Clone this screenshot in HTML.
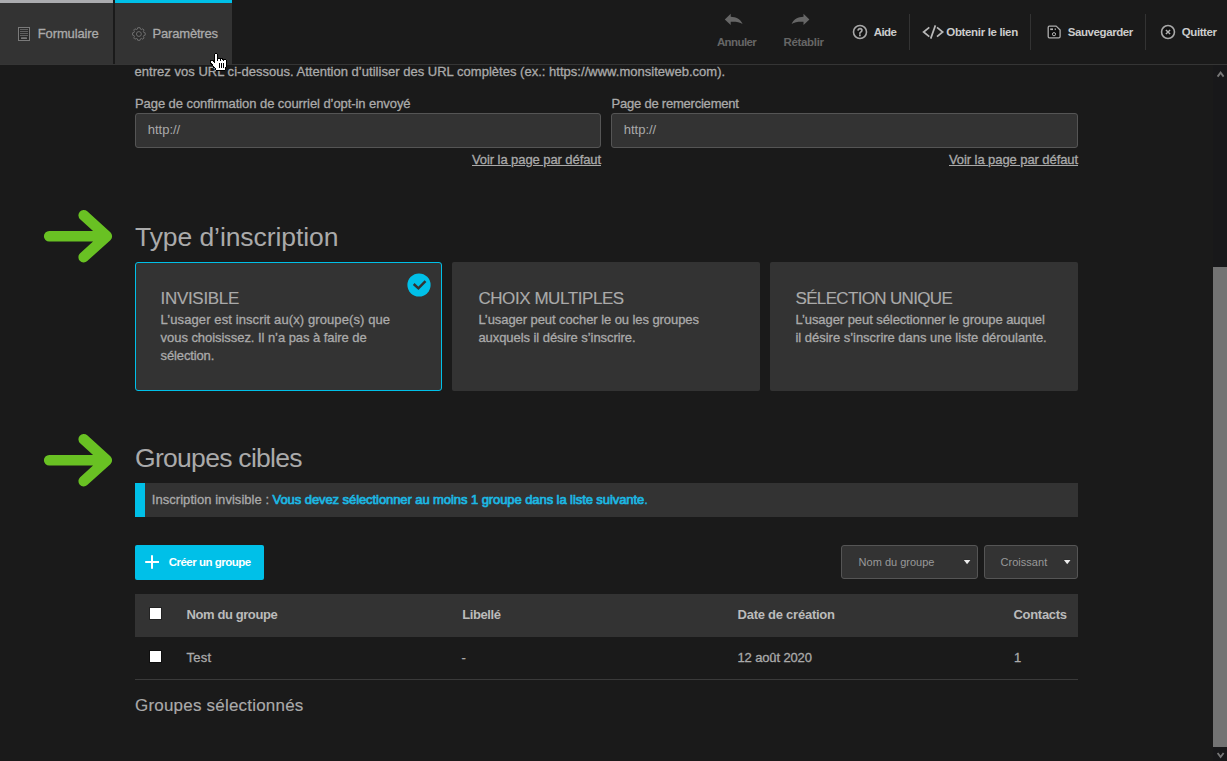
<!DOCTYPE html>
<html lang="fr"><head><meta charset="utf-8"><title>Paramètres</title>
<style>
html,body{margin:0;padding:0;}
body{width:1227px;height:761px;overflow:hidden;background:#1a1a1a;position:relative;font-family:"Liberation Sans",sans-serif;}
.t{position:absolute;display:block;white-space:nowrap;margin:0;padding:0;font-style:normal;text-decoration:none;}
.a{position:absolute;}
svg{position:absolute;overflow:visible;}
svg.ic{left:0;top:0;pointer-events:none;}
a{color:inherit;}
</style></head><body>
<header>
<div class="a" style="left:0px;top:64px;width:1227px;height:1px;background:#353535;"></div>
<nav>
  <a class="tab">
    <div class="a" style="left:0px;top:0px;width:113px;height:64px;background:#333;"></div><div class="a" style="left:0px;top:0px;width:113px;height:3px;background:#abacaf;"></div>
    <svg class="ic" width="1227" height="761" viewBox="0 0 1227 761" ><rect x="18.5" y="27.5" width="11" height="13" fill="#2b2b2b" stroke="#7a7a7a" stroke-width="1"/><g stroke="#707070" stroke-width="0.8"><line x1="20" y1="29.5" x2="28" y2="29.5"/><line x1="20" y1="31.5" x2="28" y2="31.5"/><line x1="20" y1="33.5" x2="28" y2="33.5"/><line x1="20" y1="35.5" x2="28" y2="35.5"/></g><rect x="21" y="37.2" width="6" height="1.8" rx="0.6" fill="#7a7a7a"/></svg>
    <span class="t" style="left:37.8px;top:26px;height:15px;line-height:15px;font-size:13px;font-weight:400;color:#aaa;letter-spacing:-0.136px;-webkit-text-stroke:0.3px;">Formulaire</span>
  </a>
  <a class="tab active">
    <div class="a" style="left:115px;top:0px;width:117px;height:64px;background:#333;"></div><div class="a" style="left:115px;top:0px;width:117px;height:3px;background:#00c0e8;"></div>
    <svg class="ic" width="1227" height="761" viewBox="0 0 1227 761" ><g transform="translate(138.9,34) scale(0.9)" fill="#2d2d2d" stroke="#787878" stroke-width="0.95" stroke-linejoin="round"><path d="M-1.3,-7 L1.3,-7 L1.7,-5.4 L3.0,-4.9 L4.4,-5.8 L5.8,-4.4 L4.9,-3.0 L5.4,-1.7 L7,-1.3 L7,1.3 L5.4,1.7 L4.9,3.0 L5.8,4.4 L4.4,5.8 L3.0,4.9 L1.7,5.4 L1.3,7 L-1.3,7 L-1.7,5.4 L-3.0,4.9 L-4.4,5.8 L-5.8,4.4 L-4.9,3.0 L-5.4,1.7 L-7,1.3 L-7,-1.3 L-5.4,-1.7 L-4.9,-3.0 L-5.8,-4.4 L-4.4,-5.8 L-3.0,-4.9 L-1.7,-5.4 Z"/><circle cx="0" cy="0" r="2.7" fill="#2b2b2b"/></g></svg>
    <span class="t" style="left:152.6px;top:26px;height:15px;line-height:15px;font-size:13px;font-weight:400;color:#aaa;letter-spacing:-0.200px;-webkit-text-stroke:0.3px;">Paramètres</span>
  </a>
</nav>
<div class="toolbar">
  <a class="tb disabled"><svg class="ic" width="1227" height="761" viewBox="0 0 1227 761" ><path fill="#666" d="M724.8 19.5 L730.7 13.8 L730.7 16.8 C736 16.9 740.5 19 742.6 23.9 C739.5 21.8 735.5 21.5 730.7 21.7 L730.7 24.9 Z"/></svg><span class="t" style="left:716.9px;top:36px;height:12px;line-height:12px;font-size:11.5px;font-weight:700;color:#666;letter-spacing:-0.592px;">Annuler</span></a>
  <a class="tb disabled"><svg class="ic" width="1227" height="761" viewBox="0 0 1227 761" ><path fill="#666" transform="translate(1534.2,0) scale(-1,1)" d="M724.8 19.5 L730.7 13.8 L730.7 16.8 C736 16.9 740.5 19 742.6 23.9 C739.5 21.8 735.5 21.5 730.7 21.7 L730.7 24.9 Z"/></svg><span class="t" style="left:783.5px;top:36px;height:12px;line-height:12px;font-size:11.5px;font-weight:700;color:#666;letter-spacing:-0.333px;">Rétablir</span></a>
  <a class="tb"><svg class="ic" width="1227" height="761" viewBox="0 0 1227 761" style="filter:grayscale(1)"><circle cx="860" cy="32" r="6.5" fill="#141414" stroke="#a8a8a8" stroke-width="1.6"/><text x="860" y="35.9" text-anchor="middle" font-family="Liberation Sans, sans-serif" font-weight="700" font-size="10" fill="#adadad" stroke="#adadad" stroke-width="0.3">?</text></svg><span class="t" style="left:873.7px;top:26px;height:12px;line-height:12px;font-size:11.5px;font-weight:700;color:#ccc;letter-spacing:-0.541px;">Aide</span></a>
  <div class="a" style="left:909px;top:14px;width:1px;height:36px;background:#333;"></div>
  <a class="tb"><svg class="ic" width="1227" height="761" viewBox="0 0 1227 761" ><g fill="none" stroke="#b8b8b8" stroke-width="1.7"><path d="M929.3 27.4 L923.6 32 L929.3 36.6"/><path d="M937 27.4 L942.7 32 L937 36.6"/><path d="M935.4 25.4 L930.7 38.6"/></g></svg><span class="t" style="left:946.3px;top:26px;height:12px;line-height:12px;font-size:11.5px;font-weight:700;color:#ccc;letter-spacing:-0.342px;">Obtenir le lien</span></a>
  <div class="a" style="left:1030px;top:14px;width:1px;height:36px;background:#333;"></div>
  <a class="tb"><svg class="ic" width="1227" height="761" viewBox="0 0 1227 761" ><path d="M1049.3 26.1 L1056.2 26.1 L1060.1 30 L1060.1 36.6 Q1060.1 37.9 1058.8 37.9 L1049.3 37.9 Q1048.2 37.9 1048.2 36.6 L1048.2 27.4 Q1048.2 26.1 1049.3 26.1 Z" fill="#0e0e0e" stroke="#adadad" stroke-width="1.3" stroke-linejoin="round"/><rect x="1050.2" y="28.4" width="2.8" height="1.7" fill="#b4b4b4"/><rect x="1054.7" y="28.4" width="1.1" height="1.7" fill="#b4b4b4"/><circle cx="1054" cy="34.2" r="1.6" fill="none" stroke="#b4b4b4" stroke-width="1"/></svg><span class="t" style="left:1067.7px;top:26px;height:12px;line-height:12px;font-size:11.5px;font-weight:700;color:#ccc;letter-spacing:-0.409px;">Sauvegarder</span></a>
  <div class="a" style="left:1145px;top:14px;width:1px;height:36px;background:#333;"></div>
  <a class="tb"><svg class="ic" width="1227" height="761" viewBox="0 0 1227 761" ><circle cx="1168" cy="32" r="6.45" fill="#111" stroke="#a8a8a8" stroke-width="1.6"/><path d="M1165.9 29.9 L1170.1 34.1 M1170.1 29.9 L1165.9 34.1" stroke="#b4b4b4" stroke-width="1.4" fill="none"/></svg><span class="t" style="left:1181.8px;top:26px;height:12px;line-height:12px;font-size:11.5px;font-weight:700;color:#ccc;letter-spacing:-0.434px;">Quitter</span></a>
</div>
</header>
<main>
<section class="urls">
  <p class="t" style="left:134.6px;top:64px;height:15px;line-height:15px;font-size:13px;font-weight:400;color:#aaa;letter-spacing:0.020px;-webkit-text-stroke:0.3px;">entrez vos URL ci-dessous. Attention d’utiliser des URL complètes (ex.: https://www.monsiteweb.com).</p>
  <div class="field">
    <label class="t" style="left:135.0px;top:96px;height:15px;line-height:15px;font-size:13px;font-weight:400;color:#aaa;letter-spacing:-0.071px;-webkit-text-stroke:0.3px;">Page de confirmation de courriel d’opt-in envoyé</label>
    <div class="a" style="left:135px;top:113px;width:466px;height:35px;background:#333;box-sizing:border-box;border:1px solid #555;border-radius:3px;"></div>
    <span class="t" style="left:147.8px;top:122px;height:15px;line-height:15px;font-size:13px;font-weight:400;color:#aaa;letter-spacing:-0.022px;">http://</span>
    <a class="t" style="left:472.0px;top:152px;height:15px;line-height:15px;font-size:13px;font-weight:400;color:#aaa;letter-spacing:-0.079px;-webkit-text-stroke:0.3px;text-decoration:underline;">Voir la page par défaut</a>
  </div>
  <div class="field">
    <label class="t" style="left:611.5px;top:96px;height:15px;line-height:15px;font-size:13px;font-weight:400;color:#aaa;letter-spacing:-0.217px;-webkit-text-stroke:0.3px;">Page de remerciement</label>
    <div class="a" style="left:611px;top:113px;width:467px;height:35px;background:#333;box-sizing:border-box;border:1px solid #555;border-radius:3px;"></div>
    <span class="t" style="left:623.8px;top:122px;height:15px;line-height:15px;font-size:13px;font-weight:400;color:#aaa;letter-spacing:-0.022px;">http://</span>
    <a class="t" style="left:949.0px;top:152px;height:15px;line-height:15px;font-size:13px;font-weight:400;color:#aaa;letter-spacing:-0.079px;-webkit-text-stroke:0.3px;text-decoration:underline;">Voir la page par défaut</a>
  </div>
</section>
<section class="type">
  <svg class="ic" width="1227" height="761" viewBox="0 0 1227 761" ><g fill="none" stroke="#69c123" stroke-width="10.6" stroke-linecap="round" stroke-linejoin="round"><path d="M49.2 236.2 L106.5 236.2 M83.7 215.29999999999998 L106.8 236.2 L83.7 257.09999999999997"/></g></svg>
  <h2 class="t" style="left:135.0px;top:222px;height:30px;line-height:30px;font-size:26.5px;font-weight:400;color:#aaa;letter-spacing:-0.079px;">Type d’inscription</h2>
  <div class="card selected">
    <div class="a" style="left:135px;top:262px;width:307px;height:129px;background:#333;box-sizing:border-box;border:1px solid #00c0e8;border-radius:3px;"></div>
    <svg class="ic" width="1227" height="761" viewBox="0 0 1227 761" ><circle cx="419" cy="285" r="11.6" fill="#00c0e8"/><path d="M413.7 284 L418.4 288.3 L425.5 281.2" fill="none" stroke="#333" stroke-width="2.5"/></svg>
    <h3 class="t" style="left:160.6px;top:289px;height:19px;line-height:19px;font-size:17px;font-weight:400;color:#aaa;letter-spacing:-0.321px;-webkit-text-stroke:0.15px;">INVISIBLE</h3>
    <span class="t" style="left:160.6px;top:312px;height:15px;line-height:15px;font-size:13px;font-weight:400;color:#aaa;letter-spacing:0.104px;-webkit-text-stroke:0.3px;">L’usager est inscrit au(x) groupe(s) que</span>
    <span class="t" style="left:160.6px;top:330px;height:15px;line-height:15px;font-size:13px;font-weight:400;color:#aaa;letter-spacing:-0.054px;-webkit-text-stroke:0.3px;">vous choisissez. Il n’a pas à faire de</span>
    <span class="t" style="left:160.6px;top:348px;height:15px;line-height:15px;font-size:13px;font-weight:400;color:#aaa;letter-spacing:-0.136px;-webkit-text-stroke:0.3px;">sélection.</span>
  </div>
  <div class="card">
    <div class="a" style="left:452px;top:262px;width:308px;height:129px;background:#333;border-radius:2px;"></div>
    <h3 class="t" style="left:478.4px;top:289px;height:19px;line-height:19px;font-size:17px;font-weight:400;color:#aaa;letter-spacing:-0.427px;-webkit-text-stroke:0.15px;">CHOIX MULTIPLES</h3>
    <span class="t" style="left:478.4px;top:312px;height:15px;line-height:15px;font-size:13px;font-weight:400;color:#aaa;letter-spacing:-0.074px;-webkit-text-stroke:0.3px;">L’usager peut cocher le ou les groupes</span>
    <span class="t" style="left:478.4px;top:330px;height:15px;line-height:15px;font-size:13px;font-weight:400;color:#aaa;letter-spacing:-0.060px;-webkit-text-stroke:0.3px;">auxquels il désire s’inscrire.</span>
  </div>
  <div class="card">
    <div class="a" style="left:770px;top:262px;width:308px;height:129px;background:#333;border-radius:2px;"></div>
    <h3 class="t" style="left:795.5px;top:289px;height:19px;line-height:19px;font-size:17px;font-weight:400;color:#aaa;letter-spacing:-0.660px;-webkit-text-stroke:0.15px;">SÉLECTION UNIQUE</h3>
    <span class="t" style="left:795.5px;top:312px;height:15px;line-height:15px;font-size:13px;font-weight:400;color:#aaa;letter-spacing:-0.068px;-webkit-text-stroke:0.3px;">L’usager peut sélectionner le groupe auquel</span>
    <span class="t" style="left:795.5px;top:330px;height:15px;line-height:15px;font-size:13px;font-weight:400;color:#aaa;letter-spacing:-0.021px;-webkit-text-stroke:0.3px;">il désire s’inscrire dans une liste déroulante.</span>
  </div>
</section>
<section class="groups">
  <svg class="ic" width="1227" height="761" viewBox="0 0 1227 761" ><g fill="none" stroke="#69c123" stroke-width="10.6" stroke-linecap="round" stroke-linejoin="round"><path d="M49.2 460.2 L106.5 460.2 M83.7 439.3 L106.8 460.2 L83.7 481.09999999999997"/></g></svg>
  <h2 class="t" style="left:135.0px;top:443px;height:30px;line-height:30px;font-size:26.5px;font-weight:400;color:#aaa;letter-spacing:-0.705px;">Groupes cibles</h2>
  <div class="notice">
    <div class="a" style="left:135px;top:483px;width:943px;height:34px;background:#333;"></div><div class="a" style="left:135px;top:483px;width:10px;height:34px;background:#00c0e8;"></div>
    <span class="t" style="left:151.8px;top:492px;height:15px;line-height:15px;font-size:13px;font-weight:400;color:#aaa;letter-spacing:0.044px;-webkit-text-stroke:0.3px;">Inscription invisible :</span>
    <span class="t" style="left:272.6px;top:492px;height:15px;line-height:15px;font-size:13px;font-weight:400;color:#1cb8e3;letter-spacing:-0.077px;-webkit-text-stroke:0.3px;"><b style="font-weight:400;-webkit-text-stroke:0.7px">Vous devez sélectionner au moins 1 groupe dans la liste suivante</b>.</span>
  </div>
  <div class="actions">
    <a class="btn">
      <div class="a" style="left:135px;top:545px;width:129px;height:35px;background:#00c0e8;border-radius:2px;"></div>
      <svg class="ic" width="1227" height="761" viewBox="0 0 1227 761" ><path d="M145.2 562 L159 562 M152 555.2 L152 568.8" stroke="#fff" stroke-width="2" fill="none"/></svg>
      <span class="t" style="left:168.7px;top:556px;height:12px;line-height:12px;font-size:11.5px;font-weight:700;color:#fff;letter-spacing:-0.498px;">Créer un groupe</span>
    </a>
    <div class="select">
      <div class="a" style="left:841px;top:545px;width:137px;height:34px;background:#333;box-sizing:border-box;border:1px solid #555;border-radius:3px;"></div>
      <span class="t" style="left:858.6px;top:556px;height:12px;line-height:12px;font-size:11px;font-weight:400;color:#999;letter-spacing:0.006px;">Nom du groupe</span>
      <svg class="ic" width="1227" height="761" viewBox="0 0 1227 761" ><path d="M963.8 560 L970.4 560 L967.1 564.2 Z" fill="#ececec" stroke="#262626" stroke-width="0.6" paint-order="stroke"/></svg>
    </div>
    <div class="select">
      <div class="a" style="left:984px;top:545px;width:94px;height:34px;background:#333;box-sizing:border-box;border:1px solid #555;border-radius:3px;"></div>
      <span class="t" style="left:1000.6px;top:556px;height:12px;line-height:12px;font-size:11px;font-weight:400;color:#999;letter-spacing:0.016px;">Croissant</span>
      <svg class="ic" width="1227" height="761" viewBox="0 0 1227 761" ><path d="M1063.8999999999999 560 L1070.5 560 L1067.1999999999998 564.2 Z" fill="#ececec" stroke="#262626" stroke-width="0.6" paint-order="stroke"/></svg>
    </div>
  </div>
  <div class="table">
    <div class="thead">
      <div class="a" style="left:135px;top:594px;width:943px;height:43px;background:#333;"></div>
      <div class="a" style="left:150px;top:608px;width:11px;height:11px;background:#fff;box-shadow:0 0 0 1px #232323;"></div>
      <span class="t" style="left:186.5px;top:607px;height:15px;line-height:15px;font-size:13px;font-weight:700;color:#bbb;letter-spacing:-0.404px;">Nom du groupe</span>
      <span class="t" style="left:462.2px;top:607px;height:15px;line-height:15px;font-size:13px;font-weight:700;color:#bbb;letter-spacing:-0.398px;">Libellé</span>
      <span class="t" style="left:737.5px;top:607px;height:15px;line-height:15px;font-size:13px;font-weight:700;color:#bbb;letter-spacing:-0.244px;">Date de création</span>
      <span class="t" style="left:1013.5px;top:607px;height:15px;line-height:15px;font-size:13px;font-weight:700;color:#bbb;letter-spacing:-0.304px;">Contacts</span>
    </div>
    <div class="row">
      <div class="a" style="left:150px;top:651px;width:11px;height:11px;background:#fff;box-shadow:0 0 0 1px #0e0e0e;"></div>
      <span class="t" style="left:186.5px;top:650px;height:15px;line-height:15px;font-size:13px;font-weight:400;color:#aaa;letter-spacing:0.219px;-webkit-text-stroke:0.3px;">Test</span>
      <span class="t" style="left:461.6px;top:650px;height:15px;line-height:15px;font-size:13px;font-weight:400;color:#aaa;letter-spacing:0.000px;-webkit-text-stroke:0.3px;">-</span>
      <span class="t" style="left:737.5px;top:650px;height:15px;line-height:15px;font-size:13px;font-weight:400;color:#aaa;letter-spacing:-0.137px;-webkit-text-stroke:0.3px;">12 août 2020</span>
      <span class="t" style="left:1014.0px;top:650px;height:15px;line-height:15px;font-size:13px;font-weight:400;color:#aaa;letter-spacing:0.000px;-webkit-text-stroke:0.3px;">1</span>
      <div class="a" style="left:135px;top:679px;width:943px;height:1px;background:#3a3a3a;"></div>
    </div>
  </div>
  <h3 class="t" style="left:135.0px;top:696px;height:19px;line-height:19px;font-size:17px;font-weight:400;color:#aaa;letter-spacing:0.203px;-webkit-text-stroke:0.15px;">Groupes sélectionnés</h3>
</section>
</main>
<div class="scrollbar">
  <div class="a" style="left:1213px;top:65px;width:14px;height:696px;background:#18181a;"></div>
  <div class="a" style="left:1213px;top:267px;width:14px;height:480px;background:#737373;"></div>
  <svg class="ic" width="1227" height="761" viewBox="0 0 1227 761" ><path d="M1217.6 76.6 L1220.6 72.6 L1223.6 76.6" fill="none" stroke="#777" stroke-width="1.8"/><path d="M1217.6 753 L1220.6 757 L1223.6 753" fill="none" stroke="#777" stroke-width="1.8"/></svg>
</div>
<svg class="cursor" width="30" height="30" viewBox="205 50 30 30" style="left:205px;top:50px;z-index:10" shape-rendering="crispEdges">
  <path d="M215.3 53.5 L216.7 53.5 L217.5 54.3 L217.5 58.5 L222.7 58.5 L222.9 59.5 L225.8 59.5 L226.5 60.3 L226.5 65.4 L226 67 L225.1 68.9 L225 70.5 L216.3 70.5 L215.5 69.8 L215.4 68.3 L214.2 67.6 L213.3 66.6 L212.4 65.2 L211.4 63.7 L210.5 62.8 L210.5 61.2 L211.2 60.5 L212.8 60.5 L213.7 61.3 L214.5 62 L214.5 54.3 Z" fill="#fff" stroke="#000" stroke-width="1"/>
  <path d="M217.5 58.5 L217.5 61 M220.5 59 L220.5 60.8 M223.6 59.5 L223.6 60.8 M219.5 63.2 L219.5 67.8 M221.5 63.2 L221.5 67.8 M223.6 63.2 L223.6 67.8" stroke="#000" stroke-width="1" fill="none"/>
</svg>
</body></html>
